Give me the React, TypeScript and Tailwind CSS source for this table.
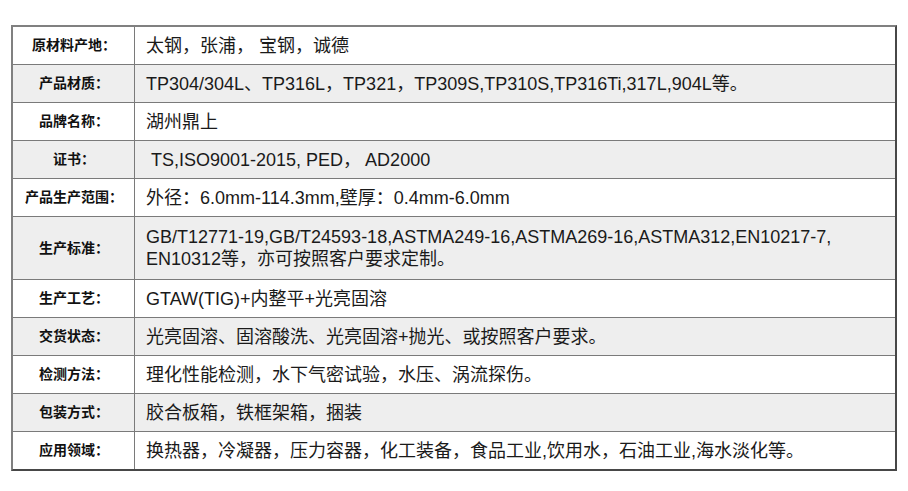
const rows: { label: string; lines: string[] }[] = [
  { label: "原材料产地：", lines: ["太钢，张浦， 宝钢，诚德"] },
  { label: "产品材质：", lines: ["TP304/304L、TP316L，TP321，TP309S,TP310S,TP316Ti,317L,904L等。"] },
  { label: "品牌名称：", lines: ["湖州鼎上"] },
  { label: "证书：", lines: ["\u00a0TS,ISO9001-2015, PED， AD2000"] },
  { label: "产品生产范围：", lines: ["外径：6.0mm-114.3mm,壁厚：0.4mm-6.0mm"] },
  {
    label: "生产标准：",
    lines: [
      "GB/T12771-19,GB/T24593-18,ASTMA249-16,ASTMA269-16,ASTMA312,EN10217-7,",
      "EN10312等，亦可按照客户要求定制。",
    ],
  },
  { label: "生产工艺：", lines: ["GTAW(TIG)+内整平+光亮固溶"] },
  { label: "交货状态：", lines: ["光亮固溶、固溶酸洗、光亮固溶+抛光、或按照客户要求。"] },
  { label: "检测方法：", lines: ["理化性能检测，水下气密试验，水压、涡流探伤。"] },
  { label: "包装方式：", lines: ["胶合板箱，铁框架箱，捆装"] },
  { label: "应用领域：", lines: ["换热器，冷凝器，压力容器，化工装备，食品工业,饮用水，石油工业,海水淡化等。"] },
];

export default function App() {
  return (
    <div
      className="w-[908px] h-[491px] bg-white pt-[25px] pl-[11px] text-[#1a1a1a]"
      style={{ fontFamily: '"Liberation Sans", "Noto Sans CJK SC", sans-serif' }}
    >
      <div className="w-[886px] border-2 border-t-[#808080] border-l-[#808080] border-r-[#474747] border-b-[#474747]">
        {rows.map((row, i) => (
          <div
            key={row.label}
            className={`flex ${i > 0 ? "border-t border-[#7a7a7a]" : ""} ${i % 2 === 1 ? "bg-[#eeeeee]" : "bg-white"}`}
          >
            <div className="w-[122px] shrink-0 border-r border-[#7a7a7a] flex items-center justify-center text-[14px] font-bold text-[#111] pl-[1px]">
              {row.label}
            </div>
            <div
              className={`flex-1 pl-[11px] flex flex-col justify-center text-[18px] leading-[22px] ${
                row.lines.length > 1 ? "h-[62px]" : "h-[37px]"
              }`}
            >
              {row.lines.map((l) => (
                <div key={l} className="whitespace-nowrap">{l}</div>
              ))}
            </div>
          </div>
        ))}
      </div>
    </div>
  );
}
